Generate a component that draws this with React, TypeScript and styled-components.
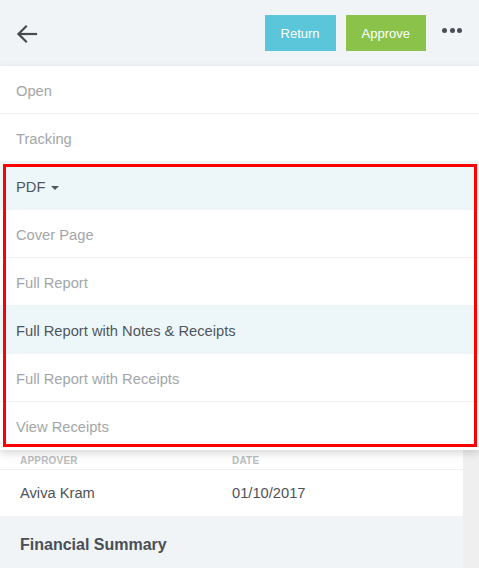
import React from "react";
import styled, { createGlobalStyle } from "styled-components";

const Global = createGlobalStyle`
  html, body { margin: 0; padding: 0; background: #ffffff; }
  body { font-family: "Liberation Sans", Arial, sans-serif; }
  * { box-sizing: border-box; }
`;

const Page = styled.div`
  width: 479px;
  height: 568px;
  overflow: hidden;
  display: flex;
  flex-direction: column;
`;

const Header = styled.header`
  height: 66px;
  flex: none;
  background: #f0f4f7;
  display: flex;
  align-items: center;
  padding: 0 17px 0 16px;
`;

const BackButton = styled.button`
  border: 0;
  background: none;
  padding: 0;
  width: 22px;
  height: 22px;
  display: flex;
  align-items: center;
  justify-content: center;
  margin-right: auto;
  margin-top: 1px;
  cursor: pointer;
`;

const ActionButton = styled.button<{ $bg: string }>`
  height: 36px;
  border: 0;
  background: ${(p) => p.$bg};
  color: #ffffff;
  font-family: "Liberation Sans", Arial, sans-serif;
  font-size: 13px;
  padding: 0 16px;
  margin-right: 10px;
  margin-top: 0;
`;

const Dots = styled.div`
  display: flex;
  gap: 2.5px;
  margin-left: 6px;
  margin-top: -6px;
  span {
    width: 5px;
    height: 5px;
    border-radius: 50%;
    background: #4a4f55;
  }
`;

const Menu = styled.div`
  flex: none;
  background: #ffffff;
  position: relative;
  z-index: 2;
  box-shadow: 0 3px 8px rgba(0, 0, 0, 0.16);
`;

const Item = styled.div<{ $active?: boolean; $highlight?: boolean; $last?: boolean }>`
  height: 48px;
  display: flex;
  align-items: center;
  padding-left: 16px;
  padding-top: 2px;
  font-size: 14.7px;
  color: ${(p) => (p.$active ? "#50565c" : "#a3a6a9")};
  background: ${(p) => (p.$highlight ? "#edf7fa" : "#ffffff")};
  border-bottom: ${(p) => (p.$last ? "0" : "1px solid #f1f2f3")};
`;

const Caret = styled.span`
  display: inline-block;
  margin-left: 6px;
  margin-top: 2px;
  border-left: 4px solid transparent;
  border-right: 4px solid transparent;
  border-top: 4px solid #50565c;
`;

const Group = styled.div`
  position: relative;
  &::after {
    content: "";
    position: absolute;
    left: 3px;
    right: 2px;
    top: 2px;
    bottom: 3px;
    border: 3px solid #ff0000;
    pointer-events: none;
  }
`;

const Body = styled.div`
  flex: 1;
  display: flex;
  min-height: 0;
`;

const Content = styled.div`
  flex: 1;
  display: flex;
  flex-direction: column;
`;

const Track = styled.div`
  width: 16px;
  flex: none;
  background: #efefef;
`;

const TableRow = styled.div<{ $head?: boolean }>`
  flex: none;
  display: grid;
  grid-template-columns: 212px 1fr;
  padding-left: 20px;
  padding-top: ${(p) => (p.$head ? "1px" : "0")};
  align-items: center;
  background: #ffffff;
  height: ${(p) => (p.$head ? "20px" : "46px")};
  border-bottom: ${(p) => (p.$head ? "1px solid #f0f1f2" : "0")};
  font-size: ${(p) => (p.$head ? "10px" : "14.7px")};
  font-weight: ${(p) => (p.$head ? 700 : 400)};
  color: ${(p) => (p.$head ? "#b8bbbe" : "#4d5257")};
  letter-spacing: ${(p) => (p.$head ? "0.2px" : "0")};
`;

const Section = styled.div`
  flex: 1;
  background: #f0f4f7;
  padding: 20px 20px;
  font-size: 16px;
  font-weight: 700;
  color: #4a4f55;
`;

export default function App() {
  return (
    <Page>
      <Global />
      <Header>
        <BackButton aria-label="Back">
          <svg width="22" height="22" viewBox="0 0 22 22" fill="none" stroke="#464b50" strokeWidth="2.2" strokeLinecap="square">
            <path d="M20 11H3" />
            <path d="M10 3.5L2.5 11L10 18.5" />
          </svg>
        </BackButton>
        <ActionButton $bg="#5bc5da">Return</ActionButton>
        <ActionButton $bg="#8bc34a">Approve</ActionButton>
        <Dots>
          <span />
          <span />
          <span />
        </Dots>
      </Header>
      <Menu>
        <Item>Open</Item>
        <Item>Tracking</Item>
        <Group>
          <Item $active $highlight>
            PDF
            <Caret />
          </Item>
          <Item>Cover Page</Item>
          <Item>Full Report</Item>
          <Item $active $highlight>Full Report with Notes &amp; Receipts</Item>
          <Item>Full Report with Receipts</Item>
          <Item $last>View Receipts</Item>
        </Group>
      </Menu>
      <Body>
        <Content>
          <TableRow $head>
            <span>APPROVER</span>
            <span>DATE</span>
          </TableRow>
          <TableRow>
            <span>Aviva Kram</span>
            <span>01/10/2017</span>
          </TableRow>
          <Section>Financial Summary</Section>
        </Content>
        <Track />
      </Body>
    </Page>
  );
}
